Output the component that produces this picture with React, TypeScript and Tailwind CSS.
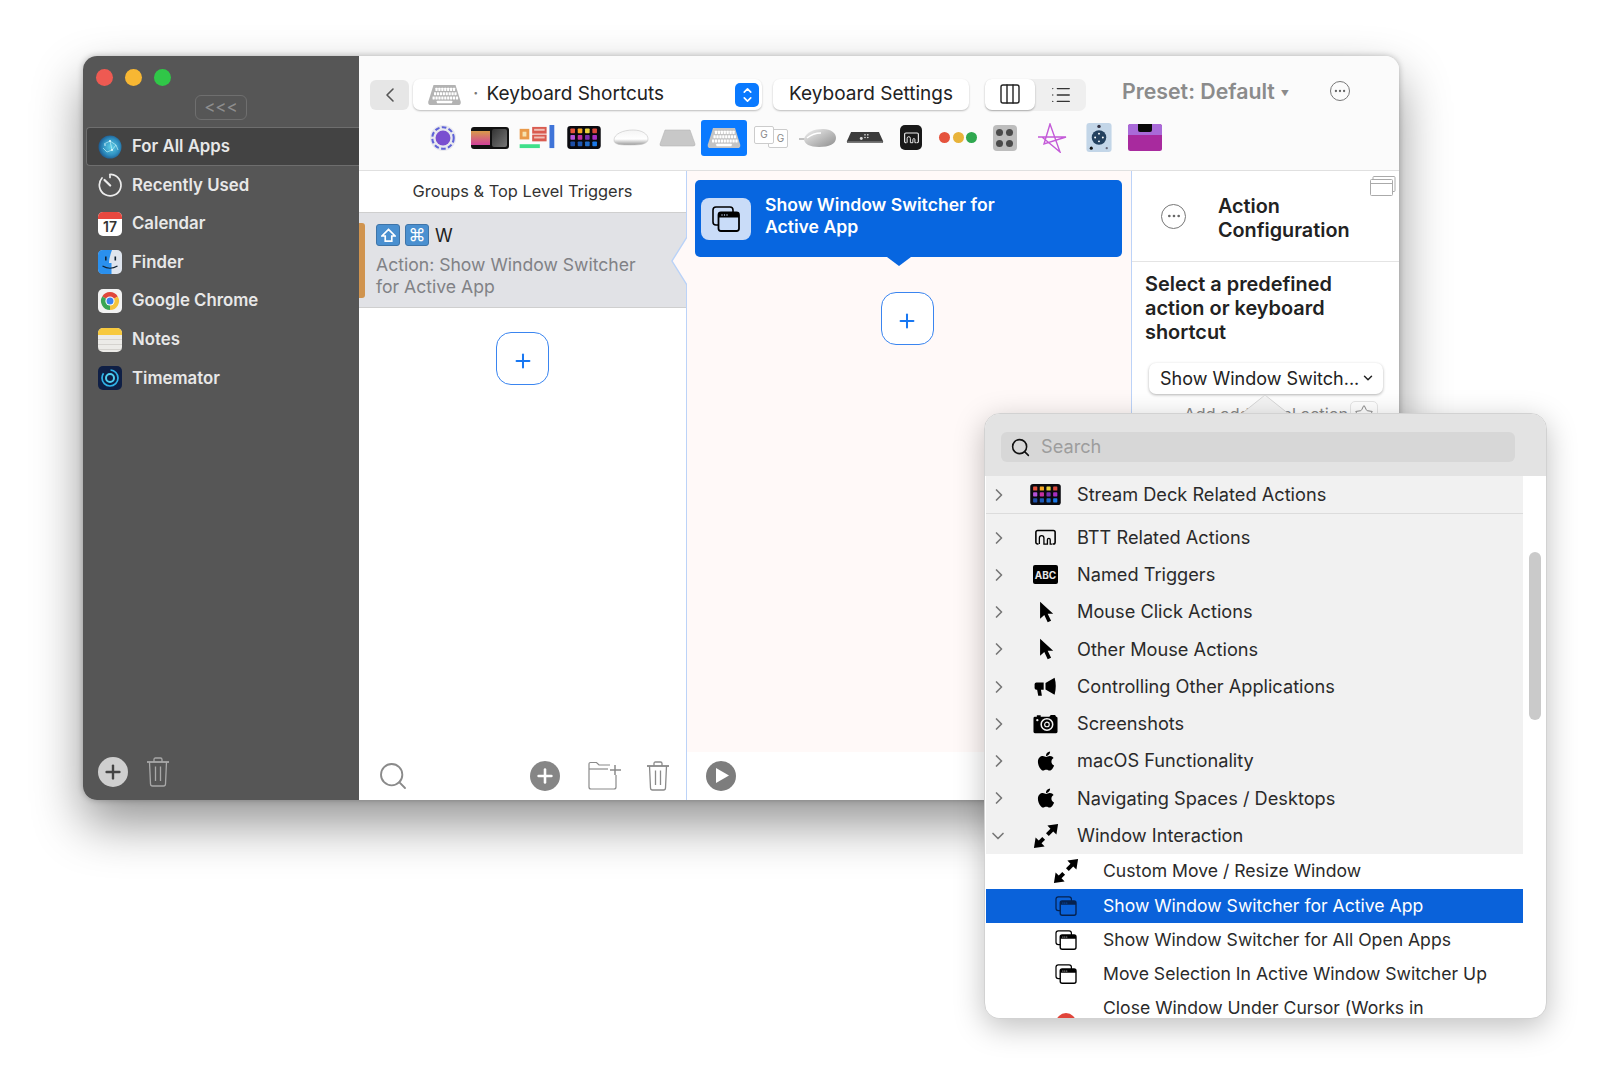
import { ChevronLeft, ChevronDown, ChevronRight, Plus, Search, Ellipsis, List, Columns3, Star } from "lucide-react";
import { FaApple } from "react-icons/fa";
import type { ReactNode } from "react";

function KeyboardIcon({ body = "#b3b3b3", keys = "#ffffff", className = "" }: { body?: string; keys?: string; className?: string }) {
  const rows = [
    { y: 4, x: 8.5, n: 7 },
    { y: 8.5, x: 7, n: 8 },
    { y: 13, x: 5.5, n: 9 },
  ];
  return (
    <svg viewBox="0 0 36 23" className={className}>
      <path d="M6.5 1H29.5L35 18.5Q35.5 22 32 22H4Q.5 22 1 18.5Z" fill={body} />
      {rows.map((r) =>
        Array.from({ length: r.n }).map((_, i) => (
          <rect key={`${r.y}-${i}`} x={r.x + i * 3.05} y={r.y} width="2.3" height="3.2" rx=".4" fill={keys} />
        ))
      )}
      <rect x="10" y="17.5" width="16" height="2.6" rx=".5" fill={keys} />
    </svg>
  );
}

function WindowSwitchIcon({ fill = "#ffffff", stroke = "#000000", className = "" }: { fill?: string; stroke?: string; className?: string }) {
  return (
    <svg viewBox="0 0 28 26" fill="none" className={className}>
      <rect x="1" y="1" width="20" height="18" rx="3" stroke={stroke} strokeWidth="1.6" />
      <rect x="6.5" y="6.5" width="20.5" height="18.5" rx="2.5" fill={fill} stroke={stroke} strokeWidth="1.8" />
      <path d="M6.5 11.5V9a2.5 2.5 0 0 1 2.5-2.5h15.5A2.5 2.5 0 0 1 27 9v2.5Z" fill={stroke} />
      <circle cx="10" cy="9" r=".7" fill={fill} />
      <circle cx="12.5" cy="9" r=".7" fill={fill} />
      <circle cx="15" cy="9" r=".7" fill={fill} />
    </svg>
  );
}

function StreamDeckIcon({ className = "" }: { className?: string }) {
  const colors = ["#e5533d", "#f5a623", "#e8d03a", "#d9483b", "#b452d8", "#c42fa0", "#7b2fb0", "#a52fc0", "#1e4fa8", "#1e58b5", "#1f6ac8", "#1a78e8"];
  return (
    <svg viewBox="0 0 32 22" className={className}>
      <rect width="32" height="22" rx="3" fill="#0a0a0f" />
      {colors.map((c, i) => (
        <rect key={c + i} x={3 + (i % 4) * 7} y={2.5 + Math.floor(i / 4) * 6.2} width="4.4" height="4.4" rx=".7" fill={c} />
      ))}
    </svg>
  );
}

function BttGlyph({ className = "", stroke = "#000000" }: { className?: string; stroke?: string }) {
  return (
    <svg viewBox="0 0 24 18" fill="none" className={className}>
      <path d="M4 16.5H3a2 2 0 0 1-2-2V3a2 2 0 0 1 2-2h18a2 2 0 0 1 2 2v11.5a2 2 0 0 1-2 2h-1" stroke={stroke} strokeWidth="1.8" />
      <path d="M5 16.5V9.5a2.6 2.6 0 0 1 5.2 0v7h4V11.5a1.6 1.6 0 0 1 3.2 0v5h2" stroke={stroke} strokeWidth="1.5" />
    </svg>
  );
}

function CursorIcon() {
  return (
    <svg viewBox="0 0 18 26" className="h-[22px] w-[16px]">
      <path d="M2 1V21L7 16.5L11 25L15 23.2L11 15H17.5Z" fill="#000" />
    </svg>
  );
}

function ResizeIcon({ className = "" }: { className?: string }) {
  return (
    <svg viewBox="0 0 28 28" className={className}>
      <path d="M27 1L15.5 2.8L18.8 6.2L14 11L17 14L21.8 9.2L25.2 12.5Z" fill="#000" />
      <path d="M1 27L12.5 25.2L9.2 21.8L13 18L10 15L6.2 18.8L2.8 15.5Z" fill="#000" />
    </svg>
  );
}

function TrashIcon({ className = "" }: { className?: string }) {
  return (
    <svg viewBox="0 0 24 30" fill="none" stroke="currentColor" strokeWidth="1.3" className={className}>
      <path d="M1 5H23" strokeWidth="1.8" />
      <path d="M8 5V2.5Q8 1 9.5 1H14.5Q16 1 16 2.5V5" />
      <path d="M3.5 5L4.5 27Q4.6 29 6.5 29H17.5Q19.4 29 19.5 27L20.5 5" />
      <path d="M9.5 9.5V24M14.5 9.5V24" />
    </svg>
  );
}

function FolderAddIcon({ className = "" }: { className?: string }) {
  return (
    <svg viewBox="0 0 34 29" fill="none" stroke="currentColor" strokeWidth="1.2" className={className}>
      <path d="M22 4H11L8.5 1.5H2.5Q1 1.5 1 3V26Q1 28 3 28H26Q28 28 28 26V14" />
      <path d="M1 8H20" />
      <path d="M27 4V14M22 9H33" strokeWidth="1.5" />
    </svg>
  );
}

function AbcIcon() {
  return (
    <div className="flex h-[19px] w-[25px] items-center justify-center rounded-[2px] bg-black text-[10px] leading-none font-bold text-[#e8e8e8]">
      ABC
    </div>
  );
}

function MegaphoneIcon() {
  return (
    <svg viewBox="0 0 26 22" className="h-[20px] w-[25px]">
      <path d="M1 8Q1 6 3 6H11V14H8L9 20.5H5L3.8 14H3Q1 14 1 12Z" fill="#000" />
      <path d="M13 6.5L23 .8Q25.6 10 23 19.5L13 13.8Z" fill="#000" />
    </svg>
  );
}

function CameraIcon() {
  return (
    <svg viewBox="0 0 26 20" className="h-[20px] w-[25px]">
      <path d="M2 2.5H4V1H8V2.5H17L18.5 .6H23L24 2.5Q25.5 2.5 25.5 4V18Q25.5 19.5 24 19.5H2Q.5 19.5 .5 18V4Q.5 2.5 2 2.5Z" fill="#000" />
      <circle cx="14.5" cy="10.5" r="6" fill="none" stroke="#f1f1f1" strokeWidth="1.6" />
      <circle cx="14.5" cy="10.5" r="2.4" fill="none" stroke="#f1f1f1" strokeWidth="1.2" />
      <circle cx="4.5" cy="6" r="1.2" fill="#f1f1f1" />
    </svg>
  );
}

function GlobeIcon() {
  return (
    <svg viewBox="0 0 24 24" className="size-6">
      <defs>
        <radialGradient id="globe" cx="55%" cy="50%" r="55%">
          <stop offset="0%" stopColor="#5fd0e8" />
          <stop offset="65%" stopColor="#2f8fc0" />
          <stop offset="100%" stopColor="#1c5a90" />
        </radialGradient>
      </defs>
      <circle cx="12" cy="12" r="11.5" fill="url(#globe)" />
      <path d="M6 9L12 6L18 10L14 15L9 17L5 13M12 6L14 15M18 10L20 15" stroke="#bff0f8" strokeWidth=".7" fill="none" />
      <circle cx="12" cy="6" r="1" fill="#e6fbff" />
      <circle cx="14" cy="15" r="1" fill="#e6fbff" />
      <circle cx="7" cy="10" r=".8" fill="#e6fbff" />
    </svg>
  );
}

function RecentIcon() {
  return (
    <svg viewBox="0 0 24 24" fill="none" className="size-6" stroke="#ececec" strokeWidth="1.7" strokeLinecap="round">
      <path d="M13 1.3A10.8 10.8 0 1 1 4 5" />
      <path d="M6.5 7L12.2 12.5" strokeWidth="2.2" />
      <path d="M12 1.3V4.5" />
    </svg>
  );
}

function CalendarIcon() {
  return (
    <div className="flex size-6 flex-col overflow-hidden rounded-[5px] bg-white">
      <div className="h-[7px] bg-[#e8483f]" />
      <div className="flex flex-1 items-center justify-center text-[14px] leading-none text-[#333]">17</div>
    </div>
  );
}

function FinderIcon() {
  return (
    <svg viewBox="0 0 24 24" className="size-6">
      <rect width="24" height="24" rx="5" fill="#dfe5ee" />
      <path d="M5 0H14Q11 8 11 13H13.5V24H5Q0 24 0 19V5Q0 0 5 0Z" fill="#2a90ee" />
      <rect x="7" y="6.5" width="1.6" height="4" fill="#123" />
      <rect x="16.5" y="6.5" width="1.6" height="4" fill="#123" />
      <path d="M4.5 16Q12 20.5 19.5 16" stroke="#123" strokeWidth="1.2" fill="none" />
    </svg>
  );
}

function ChromeIcon() {
  return (
    <svg viewBox="0 0 24 24" className="size-6">
      <rect width="24" height="24" rx="5" fill="#f2f2f2" />
      <path d="M12 12L4.2 7.5A9 9 0 0 1 19.8 7.5Z" fill="#e0473a" />
      <path d="M12 12L4.2 7.5A9 9 0 0 0 12 21Z" fill="#3aa655" />
      <path d="M12 12L12 21A9 9 0 0 0 19.8 7.5Z" fill="#f5c33b" />
      <circle cx="12" cy="12" r="4.6" fill="#fff" />
      <circle cx="12" cy="12" r="3.5" fill="#3b82ee" />
    </svg>
  );
}

function NotesIcon() {
  return (
    <div className="flex size-6 flex-col overflow-hidden rounded-[5px] bg-[#ecebe8]">
      <div className="h-[7px] bg-[#f7c93e]" />
      <div className="mt-[4px] h-px bg-[#d5d3cf]" />
      <div className="mt-[4px] h-px bg-[#d5d3cf]" />
      <div className="mt-[4px] h-px bg-[#d5d3cf]" />
    </div>
  );
}

function TimematorIcon() {
  return (
    <svg viewBox="0 0 24 24" className="size-6" fill="none">
      <rect width="24" height="24" rx="5" fill="#0f1f45" />
      <circle cx="12" cy="12" r="8" stroke="#2fb4ea" strokeWidth="1.7" strokeDasharray="30 8" />
      <circle cx="12" cy="12" r="4" stroke="#4fd0f2" strokeWidth="2" />
    </svg>
  );
}

function Toolbar() {
  const icons: { key: string; node: ReactNode }[] = [
    {
      key: "circle",
      node: (
        <svg viewBox="0 0 30 30" className="size-[28px]" fill="none">
          <circle cx="15" cy="15" r="14" fill="#e8e8ee" />
          <circle cx="15" cy="15" r="11.5" stroke="#5f63d8" strokeWidth="2.2" strokeDasharray="5 2.5" />
          <circle cx="15" cy="15" r="8" fill="#7a4fd0" />
        </svg>
      ),
    },
    {
      key: "touchbar",
      node: (
        <svg viewBox="0 0 38 22" className="h-[22px] w-[38px]">
          <rect width="38" height="22" rx="3" fill="#111" />
          <defs>
            <linearGradient id="tb" x1="0" y1="0" x2="0" y2="1">
              <stop offset="0%" stopColor="#d99a4a" />
              <stop offset="100%" stopColor="#d0409a" />
            </linearGradient>
            <linearGradient id="tg" x1="0" y1="0" x2="1" y2="1">
              <stop offset="0%" stopColor="#333" />
              <stop offset="100%" stopColor="#777" />
            </linearGradient>
          </defs>
          <rect x="0" y="4" width="19" height="14" fill="url(#tb)" />
          <rect x="21" y="2" width="15" height="18" rx="2" fill="url(#tg)" />
        </svg>
      ),
    },
    {
      key: "widgets",
      node: (
        <svg viewBox="0 0 37 26" className="h-[25px] w-[37px]">
          <rect x="1" y="4" width="10" height="11" fill="#e99a4a" />
          <rect x="4" y="7" width="4" height="5" fill="#f6e2b0" />
          <rect x="14" y="2" width="15" height="7" fill="#d95b50" />
          <rect x="14" y="10" width="15" height="7" fill="#d95b50" />
          <rect x="16" y="4" width="11" height="2" fill="#f0c0b8" />
          <rect x="16" y="12" width="11" height="2" fill="#f0c0b8" />
          <rect x="32" y="0" width="5" height="24" fill="#3f74d8" />
          <rect x="1" y="20" width="21" height="4" fill="#3fe08a" />
        </svg>
      ),
    },
    { key: "deck", node: <StreamDeckIcon className="h-[23px] w-[34px]" /> },
    {
      key: "magic",
      node: (
        <svg viewBox="0 0 36 18" className="h-[18px] w-[36px]">
          <defs>
            <linearGradient id="mm" x1="0" y1="0" x2="0" y2="1">
              <stop offset="0%" stopColor="#f4f4f4" />
              <stop offset="60%" stopColor="#ffffff" />
              <stop offset="100%" stopColor="#9a9a9a" />
            </linearGradient>
          </defs>
          <path d="M1 11C1 5 10 1 20 1C29 1 35 5 35 10C35 15 28 16 18 16C8 16 1 16 1 11Z" fill="url(#mm)" stroke="#c4c4c4" strokeWidth=".6" />
        </svg>
      ),
    },
    {
      key: "trackpad",
      node: (
        <svg viewBox="0 0 37 18" className="h-[18px] w-[37px]">
          <path d="M6 1H31L36 15Q36.5 17 34 17H3Q.5 17 1 15Z" fill="#c8c8c8" stroke="#b5b5b5" strokeWidth=".6" />
        </svg>
      ),
    },
    {
      key: "keyboard",
      node: (
        <div className="flex h-[36px] w-[46px] items-center justify-center rounded-[3px] bg-[#0a7aff]">
          <KeyboardIcon className="h-[22px] w-[36px]" body="#c4c4c4" />
        </div>
      ),
    },
    {
      key: "g",
      node: (
        <div className="relative h-[24px] w-[34px] text-[10px] text-[#888]">
          <span className="absolute top-[3px] left-[14px] flex h-[19px] w-[20px] items-center justify-center rounded-[2px] border border-[#ccc] bg-white pl-[5px]">G</span>
          <span className="absolute top-0 left-0 flex h-[18px] w-[20px] items-center justify-center rounded-[2px] border border-[#ccc] bg-white">G</span>
        </div>
      ),
    },
    {
      key: "mouse",
      node: (
        <svg viewBox="0 0 38 20" className="h-[20px] w-[38px]">
          <defs>
            <linearGradient id="m2" x1="0" y1="0" x2="1" y2="1">
              <stop offset="0%" stopColor="#f2f2f2" />
              <stop offset="100%" stopColor="#8e8e8e" />
            </linearGradient>
          </defs>
          <path d="M0 11H7" stroke="#888" strokeWidth="1" />
          <path d="M5 11C7 4 15 1 24 1C32 1 37 5 37 10C37 16 30 19 20 19C11 19 5 16 5 11Z" fill="url(#m2)" />
          <path d="M8 10Q14 5 22 5" stroke="#fff" strokeWidth="1.5" fill="none" />
        </svg>
      ),
    },
    {
      key: "remote",
      node: (
        <svg viewBox="0 0 40 14" className="h-[13px] w-[40px]">
          <path d="M5 1H35L39.5 11Q40 13 37 13H3Q0 13 .5 11Z" fill="#3c3c3c" />
          <path d="M1 11H39V13H1Z" fill="#777" />
          <g fill="#ddd">
            <circle cx="20" cy="4" r=".9" />
            <circle cx="23" cy="4" r=".9" />
            <circle cx="23" cy="7" r=".9" />
            <circle cx="20" cy="7" r=".9" />
            <circle cx="16" cy="8" r="1.6" />
          </g>
        </svg>
      ),
    },
    {
      key: "btt",
      node: (
        <div className="flex h-[25px] w-[22px] items-center justify-center rounded-[5px] bg-[#191919]">
          <BttGlyph className="h-[14px] w-[15px]" stroke="#f0f0f0" />
        </div>
      ),
    },
    {
      key: "dots",
      node: (
        <div className="flex gap-[2.5px]">
          <span className="size-[11px] rounded-full bg-[#e5533d]" />
          <span className="size-[11px] rounded-full bg-[#e8b33a]" />
          <span className="size-[11px] rounded-full bg-[#2fa84f]" />
        </div>
      ),
    },
    {
      key: "knobs",
      node: (
        <div className="grid h-[26px] w-[24px] grid-cols-2 place-items-center rounded-[4px] bg-[#bdbdbd] p-[2px]">
          <span className="size-[7px] rounded-full bg-[#4a4a4a]" />
          <span className="size-[7px] rounded-full bg-[#4a4a4a]" />
          <span className="size-[7px] rounded-full bg-[#4a4a4a]" />
          <span className="size-[7px] rounded-full bg-[#4a4a4a]" />
        </div>
      ),
    },
    {
      key: "star",
      node: (
        <svg viewBox="0 0 30 30" className="size-[30px]" fill="none" stroke="#c45ad8" strokeWidth="1.4">
          <path d="M1 14H29L7 21L13 1L23 29L5 14" />
        </svg>
      ),
    },
    {
      key: "pad",
      node: (
        <svg viewBox="0 0 26 30" className="h-[29px] w-[26px]">
          <rect width="26" height="30" rx="3" fill="#c3d6e8" />
          <circle cx="13" cy="15" r="7.5" fill="#23415f" />
          <g fill="#fff">
            <circle cx="13" cy="11" r="1" />
            <circle cx="9" cy="15" r="1" />
            <circle cx="17" cy="15" r="1" />
            <circle cx="13" cy="19" r="1" />
          </g>
          <circle cx="13" cy="3.5" r="1.8" fill="#334" />
          <circle cx="5" cy="26" r="1.6" fill="#111" />
          <circle cx="21" cy="26" r="1.2" fill="#667" />
        </svg>
      ),
    },
    {
      key: "purple",
      node: (
        <svg viewBox="0 0 34 27" className="h-[27px] w-[34px]">
          <rect width="34" height="27" rx="2.5" fill="#a82a9e" />
          <path d="M2.5 0H31.5Q34 0 34 2.5V11H0V2.5Q0 0 2.5 0Z" fill="#a96ad8" />
          <path d="M10 0H24V6Q24 8 22 8H12Q10 8 10 6Z" fill="#0a0a0a" />
        </svg>
      ),
    },
  ];

  return (
    <div className="h-[115px] border-b border-[#e0e0e0] bg-[#fbfbfb] pt-[23px] pl-[11px]">
      <div className="flex h-[31px] items-center">
        <div className="flex h-[30px] w-[39px] items-center justify-center rounded-[6px] bg-[#e6e6e6] text-[#555]">
          <ChevronLeft size={24} strokeWidth={1.6} />
        </div>
        <div className="ml-[4px] flex h-[31px] w-[349px] items-center rounded-[7px] bg-white pr-[3px] pl-[13px] text-[19px] leading-[27px] text-[#222] shadow-[0_1px_2px_rgba(0,0,0,0.25)]">
          <KeyboardIcon className="h-[22px] w-[37px]" />
          <span className="ml-[10px] -translate-y-px text-[#777]">·</span>
          <span className="ml-[8px] -translate-y-px">Keyboard Shortcuts</span>
          <div className="ml-auto flex h-[24px] w-[24px] flex-col items-center justify-center rounded-[5px] bg-[#0a7aff] text-white">
            <ChevronDown size={13} strokeWidth={3} className="-mb-[2px] rotate-180" />
            <ChevronDown size={13} strokeWidth={3} className="-mt-[2px]" />
          </div>
        </div>
        <div className="ml-[11px] flex h-[31px] w-[196px] items-center justify-center rounded-[7px] bg-white text-[19px] text-[#222] shadow-[0_1px_2px_rgba(0,0,0,0.25)]">
          Keyboard Settings
        </div>
        <div className="ml-[16px] flex h-[32px] w-[101px] rounded-[7px] bg-[#efefef]">
          <div className="flex h-[31px] w-[50px] items-center justify-center rounded-[7px] bg-white shadow-[0_1px_2px_rgba(0,0,0,0.3)]">
            <Columns3 size={24} strokeWidth={1.4} className="text-[#222]" />
          </div>
          <div className="flex flex-1 items-center justify-center">
            <List size={22} strokeWidth={1.5} className="text-[#333]" />
          </div>
        </div>
        <div className="ml-[36px] flex w-[176px] -translate-y-[3px] items-center text-[21.3px] font-semibold whitespace-nowrap text-[#8b8b8b]">
          Preset: Default
          <span className="mt-[3px] ml-[6px] text-[8px]">▼</span>
        </div>
        <div className="ml-[32px] flex size-[20px] -translate-y-[4px] items-center justify-center rounded-full border border-[#777] text-[#666]">
          <Ellipsis size={14} />
        </div>
      </div>
      <div className="mt-[9px] flex h-[37px] items-center pl-[50px]">
        {icons.map((ic) => (
          <div key={ic.key} className="flex h-[37px] w-[46.8px] shrink-0 items-center justify-center">
            {ic.node}
          </div>
        ))}
      </div>
    </div>
  );
}

function AddButton({ className = "" }: { className?: string }) {
  return (
    <div className={`flex size-[53px] items-center justify-center rounded-[15px] border-[1.5px] border-[#3a85f0] bg-white pt-[5px] text-[#1877f2] ${className}`}>
      <Plus size={22} strokeWidth={2.2} />
    </div>
  );
}

function Sidebar() {
  const apps = [
    { name: "Recently Used", icon: <RecentIcon /> },
    { name: "Calendar", icon: <CalendarIcon /> },
    { name: "Finder", icon: <FinderIcon /> },
    { name: "Google Chrome", icon: <ChromeIcon /> },
    { name: "Notes", icon: <NotesIcon /> },
    { name: "Timemator", icon: <TimematorIcon /> },
  ];
  return (
    <aside className="flex w-[276px] shrink-0 flex-col bg-[#565656] text-[16.8px] font-semibold text-[#e8e8e8]">
      <div className="flex gap-[12px] pt-[13px] pl-[13px]">
        <span className="size-[17px] rounded-full bg-[#ee5a52]" />
        <span className="size-[17px] rounded-full bg-[#f7b733]" />
        <span className="size-[17px] rounded-full bg-[#30c748]" />
      </div>
      <div className="mt-[9px] ml-[112px] flex h-[25px] w-[52px] items-center justify-center rounded-[6px] border border-[#6f6f6f] text-[17px] font-normal text-[#8e8e8e]">
        &lt;&lt;&lt;
      </div>
      <div className="mt-[7px] ml-[3px] flex h-[39px] items-center gap-[10px] rounded-l-[4px] border border-r-0 border-[#6e6e6e] bg-[#434343] pl-[11px]">
        <GlobeIcon />
        For All Apps
      </div>
      {apps.map((a) => (
        <div key={a.name} className="ml-[3px] flex h-[38.6px] items-center gap-[10px] pl-[12px]">
          {a.icon}
          {a.name}
        </div>
      ))}
      <div className="mt-auto mb-[13px] flex items-center gap-[18px] pl-[15px]">
        <div className="flex size-[30px] items-center justify-center rounded-full bg-[#cfcfcf] text-[#444]">
          <Plus size={22} strokeWidth={2.6} />
        </div>
        <TrashIcon className="h-[30px] w-[24px] text-[#a8a8a8]" />
      </div>
    </aside>
  );
}

function Columns() {
  return (
    <div className="flex min-h-0 flex-1">
      <section className="flex w-[327px] shrink-0 flex-col">
        <div className="flex h-[41px] items-center justify-center text-[16.4px] text-[#333]">Groups &amp; Top Level Triggers</div>
        <div className="relative flex h-[96px] items-center border-y border-[#cfcfcf] bg-[#e1e2e6] pl-[17px]">
          <div className="absolute top-[10px] left-0 h-[75px] w-[6px] rounded-r-[3px] bg-[#d0944f]" />
          <div>
            <div className="flex items-center gap-[5px]">
              <KeyCap>
                <svg viewBox="0 0 16 16" className="size-[15px]" fill="none" stroke="#fff" strokeWidth="1.8">
                  <path d="M8 1.5L15 8.5H11.5V14H4.5V8.5H1Z" />
                </svg>
              </KeyCap>
              <KeyCap>⌘</KeyCap>
              <span className="ml-[1px] text-[18px] text-[#222]">W</span>
            </div>
            <p className="mt-[5px] w-[275px] text-[17.6px] leading-[22.5px] text-[#808185]">Action: Show Window Switcher for Active App</p>
          </div>
          <svg viewBox="0 0 16 48" className="absolute top-[24px] -right-px h-[48px] w-[16px]">
            <path d="M16 0L1 24L16 48Z" fill="#fff9f8" />
            <path d="M16 0L1 24L16 48" fill="none" stroke="#b9d2f8" strokeWidth="1.4" />
          </svg>
        </div>
        <div className="flex flex-1 justify-center pt-[24px]">
          <AddButton />
        </div>
        <div className="flex h-[48px] items-center pb-[1px] pl-[18px] text-[#8a8a8a]">
          <Search size={32} strokeWidth={1.4} />
          <div className="ml-[121px] flex size-[30px] items-center justify-center rounded-full bg-[#868686] text-white">
            <Plus size={22} strokeWidth={2.8} />
          </div>
          <FolderAddIcon className="ml-[28px] h-[29px] w-[34px]" />
          <TrashIcon className="ml-[24px] h-[30px] w-[24px]" />
        </div>
      </section>

      <section className="flex flex-1 flex-col border-x border-[#bcd3f8]">
        <div className="flex flex-1 flex-col items-center bg-[#fff9f8] pt-[9px] pr-[9px] pl-[8px]">
          <div className="relative flex h-[77px] w-full items-center rounded-[5px] bg-[#0766e0] pb-[5px] pl-[6px] text-white">
            <div className="mt-[5px] flex h-[42px] w-[50px] items-center justify-center rounded-[8px] bg-[#c9dcf8]">
              <WindowSwitchIcon fill="#c9dcf8" className="h-[26px] w-[28px]" />
            </div>
            <p className="ml-[14px] w-[260px] text-[17.6px] leading-[22.5px] font-semibold">Show Window Switcher for Active App</p>
            <div className="absolute top-full left-[192px] size-0 border-x-[12px] border-t-[9px] border-x-transparent border-t-[#0766e0]" />
          </div>
          <AddButton className="mt-[35px] -ml-[3px]" />
        </div>
        <div className="flex h-[48px] items-center bg-white pb-[1px] pl-[19px]">
          <div className="flex size-[30px] items-center justify-center rounded-full bg-[#7d7d7d] text-white">
            <svg viewBox="0 0 14 16" className="ml-[3px] h-[15px] w-[13px]">
              <path d="M0 0L14 8L0 16Z" fill="#fff" />
            </svg>
          </div>
        </div>
      </section>

      <section className="relative w-[267px] shrink-0 text-[#222]">
        <svg viewBox="0 0 26 20" fill="none" className="absolute top-[5px] right-[3px] h-[20px] w-[26px]" stroke="#aaa">
          <rect x="3" y=".5" width="22" height="15" rx="1" />
          <rect x=".5" y="3.5" width="22" height="16" rx="1" fill="#fff" />
          <path d="M.5 7.5H22.5" />
        </svg>
        <div className="flex h-[91px] items-center border-b border-[#e4e4e4] pl-[29px]">
          <div className="flex size-[25px] items-center justify-center rounded-full border-[1.3px] border-[#777] text-[#666]">
            <Ellipsis size={16} />
          </div>
          <h2 className="mt-[4px] ml-[32px] text-[19.8px] leading-[24px] font-semibold">
            Action
            <br />
            Configuration
          </h2>
        </div>
        <p className="mt-[11px] ml-[13px] text-[19.9px] leading-[23.8px] font-semibold">
          Select a predefined
          <br />
          action or keyboard
          <br />
          shortcut
        </p>
        <div className="mt-[19px] ml-[17px] flex h-[31px] w-[234px] items-center justify-between rounded-[7px] bg-white pr-[8px] pb-[1px] pl-[11px] text-[18px] shadow-[0_1px_3px_rgba(0,0,0,0.3)]">
          Show Window Switch...
          <ChevronDown size={14} strokeWidth={2.5} />
        </div>
        <div className="mt-[7px] ml-[52px] flex items-center text-[16.5px] whitespace-nowrap text-[#888]">
          Add additional action
          <span className="ml-[2px] flex h-[26px] w-[28px] items-center justify-center rounded-[5px] border border-[#e6e6e6]">
            <Star size={20} strokeWidth={1.2} />
          </span>
        </div>
      </section>
    </div>
  );
}

function KeyCap({ children }: { children: ReactNode }) {
  return (
    <span className="flex h-[22px] w-[24px] items-center justify-center rounded-[3px] border border-[#3e74a8] bg-[#4a90d0] text-[17px] leading-none text-white">
      {children}
    </span>
  );
}

const menuRows: { label: string; icon: ReactNode }[] = [
  { label: "BTT Related Actions", icon: <BttGlyph className="h-[17px] w-[21px]" /> },
  { label: "Named Triggers", icon: <AbcIcon /> },
  { label: "Mouse Click Actions", icon: <CursorIcon /> },
  { label: "Other Mouse Actions", icon: <CursorIcon /> },
  { label: "Controlling Other Applications", icon: <MegaphoneIcon /> },
  { label: "Screenshots", icon: <CameraIcon /> },
  { label: "macOS Functionality", icon: <FaApple size={22} color="#000" /> },
  { label: "Navigating Spaces / Desktops", icon: <FaApple size={22} color="#000" /> },
];

function MenuRow({ label, icon, open = false }: { label: string; icon: ReactNode; open?: boolean }) {
  return (
    <div className="flex h-[37.25px] items-center">
      <div className="flex w-[26px] justify-center text-[#777]">
        {open ? <ChevronDown size={20} strokeWidth={2} className="-ml-[2px]" /> : <ChevronRight size={20} strokeWidth={2} />}
      </div>
      <div className="flex w-[64px] justify-center pl-[3px]">{icon}</div>
      <span className="ml-[1px]">{label}</span>
    </div>
  );
}

function SubRow({ label, icon, selected = false }: { label: string; icon: ReactNode; selected?: boolean }) {
  return (
    <div className={`flex h-[34.3px] items-center pl-[66px] text-[17.6px] ${selected ? "bg-[#0a62da] text-white" : "bg-white"}`}>
      <div className="flex w-[28px] justify-center">{icon}</div>
      <span className="ml-[23px] whitespace-nowrap">{label}</span>
    </div>
  );
}

function ActionMenu() {
  return (
    <div className="absolute top-[413px] left-[984px] flex h-[606px] w-[563px] flex-col overflow-hidden rounded-[16px] border border-[#d2d2d2] bg-white text-[18.2px] text-[#2a2a2a] shadow-[0_8px_30px_rgba(0,0,0,0.25)]">
      <div className="h-[62px] shrink-0 bg-[#e3e3e3] pt-[18px] pl-[16px]">
        <div className="flex h-[30px] w-[514px] items-center rounded-[6px] bg-[#d7d7d7] pl-[9px] text-[#9d9d9d]">
          <Search size={21} strokeWidth={1.8} className="text-[#111]" />
          <span className="ml-[10px]">Search</span>
        </div>
      </div>
      <div className="relative min-h-0 flex-1">
        <div className="ml-px w-[537px]">
          <div className="bg-[#f1f1f1]">
            <div className="flex h-[38px] items-center border-b border-[#dcdcdc]">
              <div className="flex w-[26px] justify-center text-[#777]">
                <ChevronRight size={20} strokeWidth={2} />
              </div>
              <div className="flex w-[64px] justify-center pl-[3px]">
                <StreamDeckIcon className="h-[21px] w-[31px]" />
              </div>
              <span className="ml-[1px]">Stream Deck Related Actions</span>
            </div>
            <div className="pt-[5px]">
              {menuRows.map((r) => (
                <MenuRow key={r.label} label={r.label} icon={r.icon} />
              ))}
              <MenuRow label="Window Interaction" open icon={<ResizeIcon className="size-[26px]" />} />
            </div>
          </div>
          <SubRow label="Custom Move / Resize Window" icon={<ResizeIcon className="size-[26px]" />} />
          <SubRow label="Show Window Switcher for Active App" selected icon={<WindowSwitchIcon fill="#0a62da" stroke="#06224f" className="h-[20px] w-[24px]" />} />
          <SubRow label="Show Window Switcher for All Open Apps" icon={<WindowSwitchIcon className="h-[20px] w-[24px]" />} />
          <SubRow label="Move Selection In Active Window Switcher Up" icon={<WindowSwitchIcon className="h-[20px] w-[24px]" />} />
          <SubRow
            label="Close Window Under Cursor (Works in"
            icon={<span className="mt-[29px] size-[20px] rounded-full bg-[#e0443a]" />}
          />
        </div>
        <div className="absolute top-[76px] right-[5px] h-[168px] w-[12px] rounded-full bg-[#cacaca]" />
      </div>
    </div>
  );
}

export default function App() {
  return (
    <div className="relative h-[1078px] w-[1600px] overflow-hidden bg-white pt-[56px] pl-[83px] [font-family:Inter,'Liberation_Sans',sans-serif]">
      <div className="flex h-[744px] w-[1316px] overflow-hidden rounded-[14px] bg-white shadow-[0_24px_50px_rgba(0,0,0,0.42),0_0_6px_rgba(0,0,0,0.25)]">
        <Sidebar />
        <main className="flex min-w-0 flex-1 flex-col">
          <Toolbar />
          <Columns />
        </main>
      </div>
      <svg viewBox="0 0 50 20" className="absolute top-[395px] left-[1240px] h-[20px] w-[50px]">
        <path d="M0 20L25 0L50 20Z" fill="#f4f4f4" />
        <path d="M0 20L25 0L50 20" fill="none" stroke="#d8d8d8" />
      </svg>
      <ActionMenu />
    </div>
  );
}
